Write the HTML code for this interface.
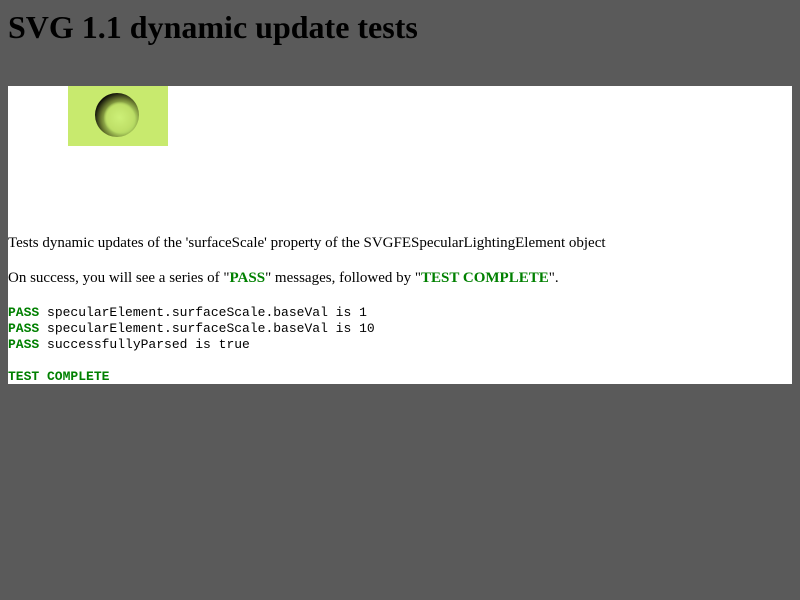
<!DOCTYPE html>
<html><head><style>
html,body{margin:0;padding:0;background:#5a5a5a;width:800px;height:600px;overflow:hidden;font-family:"Liberation Serif",serif;}
h1{position:absolute;left:8px;top:8px;margin:0;font-size:32px;font-weight:bold;color:#000;line-height:38px;}
#box{position:absolute;left:8px;top:86px;width:784px;height:298px;background:#fff;}
.t{position:absolute;left:0;font-size:15px;color:#000;white-space:nowrap;line-height:18px;}
.g{color:#008000;font-weight:bold;}
.m{position:absolute;left:0;font-family:"Liberation Mono",monospace;font-size:13px;line-height:16px;white-space:pre;color:#000;}
</style></head><body>
<h1>SVG 1.1 dynamic update tests</h1>
<div id="box">
<svg style="position:absolute;left:60px;top:0" width="100" height="60">
<defs>
<radialGradient id="r" cx="0.6" cy="0.6" r="0.62">
<stop offset="0" stop-color="#c8ec70"/>
<stop offset="0.5" stop-color="#b4d862"/>
<stop offset="0.75" stop-color="#6a7a30"/>
<stop offset="1" stop-color="#101008"/>
</radialGradient>
<radialGradient id="i" cx="0.5" cy="0.5" r="0.5">
<stop offset="0" stop-color="#cdf078"/>
<stop offset="0.8" stop-color="#bfe068"/>
<stop offset="1" stop-color="#bfe068" stop-opacity="0"/>
</radialGradient>
</defs>
<rect width="100" height="60" fill="#c8ea6e"/>
<circle cx="49" cy="29" r="22" fill="url(#r)"/>
<circle cx="51.5" cy="31.5" r="16" fill="url(#i)"/>
</svg>
<div class="t" style="top:148px">Tests dynamic updates of the 'surfaceScale' property of the SVGFESpecularLightingElement object</div>
<div class="t" style="top:183px">On success, you will see a series of "<span class="g">PASS</span>" messages, followed by "<span class="g">TEST COMPLETE</span>".</div>
<div class="m" style="top:219px"><span class="g">PASS</span> specularElement.surfaceScale.baseVal is 1</div>
<div class="m" style="top:235px"><span class="g">PASS</span> specularElement.surfaceScale.baseVal is 10</div>
<div class="m" style="top:251px"><span class="g">PASS</span> successfullyParsed is true</div>
<div class="m" style="top:283px"><span class="g">TEST COMPLETE</span></div>
</div>
</body></html>
